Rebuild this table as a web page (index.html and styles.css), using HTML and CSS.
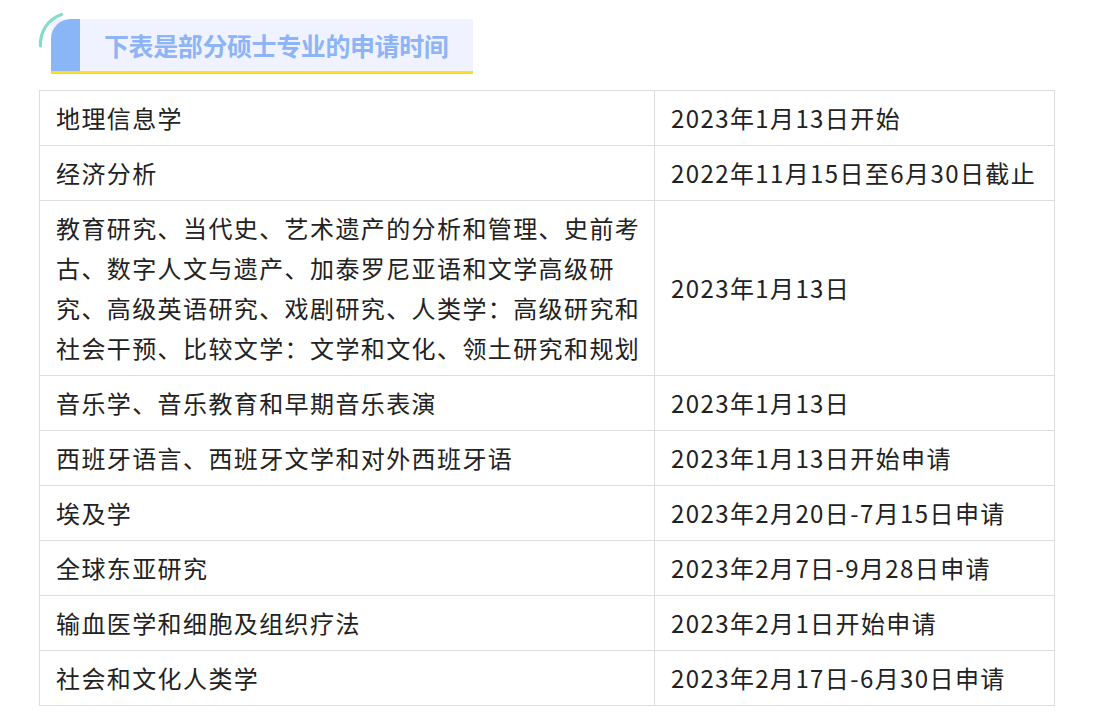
FILE: index.html
```html
<!DOCTYPE html>
<html lang="zh-CN">
<head>
<meta charset="utf-8">
<link rel="stylesheet" href="styles.css">
</head>
<body>
<div class="page">
  <div class="title-wrap">
    <svg class="arc" width="40" height="44" viewBox="0 0 40 44">
      <path d="M 23.5 3.5 A 31 31 0 0 0 2.5 35" fill="none" stroke="#86dccb" stroke-width="3.2" stroke-linecap="round"/>
    </svg>
    <div class="title-bar">
      <div class="title-block"></div>
      <div class="title-text">下表是部分硕士专业的申请时间</div>
    </div>
  </div>
  <table class="tbl">
    <colgroup><col class="c1"><col class="c2"></colgroup>
    <tbody>
      <tr><td>地理信息学</td><td>2023年1月13日开始</td></tr>
      <tr><td>经济分析</td><td>2022年11月15日至6月30日截止</td></tr>
      <tr><td>教育研究、当代史、艺术遗产的分析和管理、史前考古、数字人文与遗产、加泰罗尼亚语和文学高级研究、高级英语研究、戏剧研究、人类学：高级研究和社会干预、比较文学：文学和文化、领土研究和规划</td><td>2023年1月13日</td></tr>
      <tr><td>音乐学、音乐教育和早期音乐表演</td><td>2023年1月13日</td></tr>
      <tr><td>西班牙语言、西班牙文学和对外西班牙语</td><td>2023年1月13日开始申请</td></tr>
      <tr><td>埃及学</td><td>2023年2月20日-7月15日申请</td></tr>
      <tr><td>全球东亚研究</td><td>2023年2月7日-9月28日申请</td></tr>
      <tr><td>输血医学和细胞及组织疗法</td><td>2023年2月1日开始申请</td></tr>
      <tr><td>社会和文化人类学</td><td>2023年2月17日-6月30日申请</td></tr>
    </tbody>
  </table>
</div>
</body>
</html>
```

FILE: styles.css
```css
html, body {
  margin: 0;
  padding: 0;
  background: #ffffff;
}
.page {
  padding: 19px 0 0 39px;
  font-family: "Noto Sans CJK SC", sans-serif;
}
.title-wrap {
  position: relative;
  margin-left: 12px;
  width: 422px;
}
.arc {
  position: absolute;
  left: -13px;
  top: -8px;
}
.title-bar {
  display: flex;
  align-items: stretch;
  height: 52px;
  background: #f0f3ff;
  border-bottom: 3px solid #fddc25;
}
.title-block {
  flex: 0 0 29px;
  width: 29px;
  background: #8ab5f7;
  border-top-left-radius: 20px;
}
.title-text {
  flex: 1 1 auto;
  padding-left: 24px;
  line-height: 52px;
  font-family: "Noto Sans CJK SC", sans-serif;
  font-weight: 700;
  font-size: 25px;
  letter-spacing: -0.4px;
  color: #8cb4f6;
  white-space: nowrap;
  overflow: hidden;
}
.tbl {
  margin-top: 16px;
  border-collapse: collapse;
  width: 1015px;
  table-layout: fixed;
  color: #222222;
  font-size: 24px;
  letter-spacing: 1.4px;
}
.c1 { width: 615px; }
.c2 { width: 400px; }
.tbl td {
  border: 1px solid #dddddd;
  padding: 7px 10px 7px 16px;
  line-height: 40px;
  vertical-align: middle;
}
```
